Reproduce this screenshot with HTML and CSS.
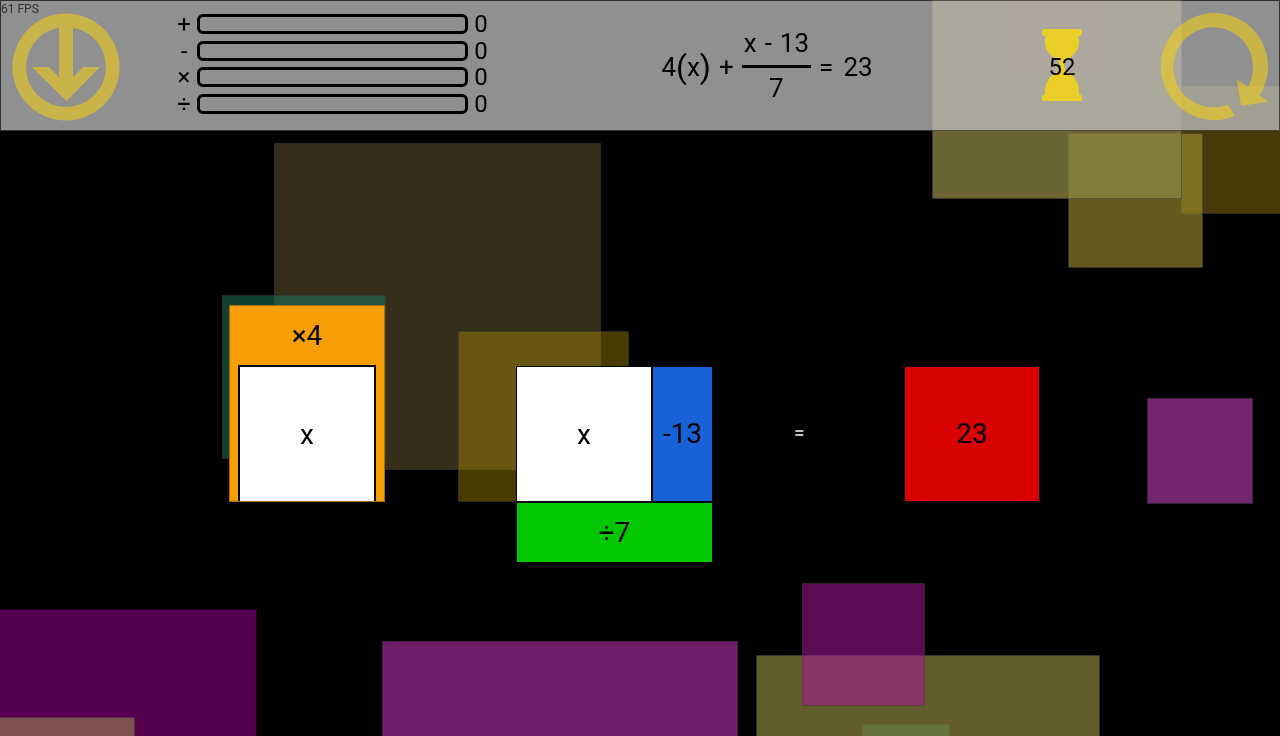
FILE: index.html
```html
<!DOCTYPE html>
<html lang="en">
<head>
<meta charset="utf-8">
<title>Equation Game</title>
<link rel="stylesheet" href="styles.css">
</head>
<body>
<svg class="backdrop" viewBox="0 0 1280 736" preserveAspectRatio="xMidYMid slice" aria-hidden="true">
  <g transform="translate(.5 .5)">
    <rect x="1181" y="86" width="120" height="127" fill="#453a08"/>
    <rect x="1068" y="133" width="134" height="134" fill="#a09031" fill-opacity=".63"/>
    <rect x="932" y="-51" width="249" height="249" fill="#8f8744" fill-opacity=".75"/>
    <rect class="soft" x="1009" y="-21" width="94" height="94" fill="#905060" fill-opacity=".3"/>
    <rect x="274" y="143" width="326" height="326" fill="#352e1b"/>
    <rect x="222" y="295" width="163" height="163" fill="#1e7259" fill-opacity=".57"/>
    <rect x="458" y="331" width="170" height="170" fill="#b49600" fill-opacity=".4"/>
    <rect x="1147" y="398" width="105" height="105" fill="#73256d"/>
    <rect x="756" y="655" width="343" height="343" fill="#635d2b"/>
    <rect x="802" y="583" width="122" height="122" fill="#a9169d" fill-opacity=".54"/>
    <rect class="soft" x="862" y="724" width="87" height="87" fill="#689860" fill-opacity=".4"/>
    <rect x="382" y="641" width="355" height="355" fill="#6f1d6a"/>
    <rect class="soft" x="-20" y="609" width="276" height="276" fill="#580050"/>
    <rect x="-20" y="717" width="154" height="154" fill="#805050"/>
  </g>
</svg>
<header class="panel">
  <output class="fps">61 FPS</output>
  <button class="icon-button" type="button" aria-label="Drop">
    <svg viewBox="0 0 108 108"><path fill-rule="evenodd" d="M54 .5a53.500 53.500 0 1 1 0 107a53.500 53.500 0 1 1 0-107zM54 14a40 40 0 1 0 0 80a40 40 0 1 0 0-80z"/><path d="M47 13H61V64.500L71 54H88L54.500 88L20 54H37L47 64.500z"/></svg>
  </button>
  <div class="scores">
    <div class="score"><label for="add">+</label><progress id="add" value="0" max="10"></progress><span>0</span></div>
    <div class="score"><label for="sub">-</label><progress id="sub" value="0" max="10"></progress><span>0</span></div>
    <div class="score"><label for="mul">×</label><progress id="mul" value="0" max="10"></progress><span>0</span></div>
    <div class="score"><label for="div">÷</label><progress id="div" value="0" max="10"></progress><span>0</span></div>
  </div>
  <div class="equation">
    <span class="term">4<span class="paren">(</span>x<span class="paren">)</span></span>
    <span>+</span>
    <span class="fraction"><span class="numerator"><span>x</span> <span>-</span> <span>13</span></span><span class="denominator">7</span></span>
    <span class="equals">=</span>
    <span>23</span>
  </div>
  <div class="timer">
    <svg viewBox="0 0 40 72" aria-hidden="true"><path d="M1.500 0H38.500L40 1.500V5.500L38 7H36.500C39 17 34 24 29 28C25 31 22 33 22 36.500C22 40 25 42 28 45C34 49 37 55 37 62V65.500H38.500L40 67V72H0V67L1.500 65.500H3V62C3 55 6 49 12 45C15 42 18 40 18 36.500C18 33 15 31 11 28C6 24 1 17 3.500 7H2L0 5.500V1.500z"/></svg>
    <span>52</span>
  </div>
  <button class="icon-button" type="button" aria-label="Restart">
    <svg viewBox="0 0 108 108"><path d="M68 91.500A40 40 0 1 1 88 74L77 66.500L81 93L108 88.500L99.500 82.500A53.500 53.500 0 1 0 75 103z"/></svg>
  </button>
</header>
<main class="board">
  <div class="product">
    <div class="factor">×4</div>
    <div class="block variable">x</div>
  </div>
  <div class="quotient">
    <div class="block variable">x</div>
    <div class="block subtract">-13</div>
    <div class="block divisor">÷7</div>
  </div>
  <div class="balance">=</div>
  <div class="block result">23</div>
</main>
</body>
</html>
```
FILE: styles.css
```css
* {
  box-sizing: border-box;
}

body {
  margin: 0;
  min-height: 100vh;
  background: #000;
  color: #000;
  font-family: Roboto, sans-serif;
  overflow: hidden;
}

.backdrop {
  position: fixed;
  inset: 0;
  width: 100%;
  height: 100%;
  z-index: -1;
}

.backdrop rect {
  stroke: #3c3c3c;
  stroke-opacity: 0.5;
}

.backdrop .soft {
  stroke: none;
}

.panel {
  position: relative;
  display: grid;
  grid-template-columns: 108px 368px 1fr 40px 197px;
  align-items: center;
  padding: 12px 0 9px 11px;
  border: 1px solid rgba(70, 70, 70, 0.7);
  background: rgba(192, 192, 192, 0.75);
  background-clip: padding-box;
}

.fps {
  position: absolute;
  top: 0;
  left: 0;
  font-size: 12px;
  line-height: 16px;
  color: #303030;
}

.icon-button {
  width: 108px;
  height: 108px;
  padding: 0;
  border: 0;
  background: none;
  justify-self: end;
  margin-right: 11px;
  cursor: pointer;
}

.icon-button:first-of-type {
  margin-right: 0;
}

.icon-button svg {
  display: block;
  fill: #f6d20e;
  opacity: 0.55;
}

.scores {
  display: flex;
  flex-direction: column;
  justify-content: space-between;
  height: 100px;
  padding-left: 57px;
  margin-bottom: 6px;
}

.score {
  display: grid;
  grid-template-columns: 14px 1fr 14px;
  column-gap: 6px;
  align-items: center;
  height: 20px;
  font-size: 24px;
  line-height: 20px;
  text-align: center;
}

.score progress {
  appearance: none;
  width: 100%;
  height: 20px;
  border: 3px solid #000;
  border-radius: 6px;
  background: none;
}

.score progress::-webkit-progress-bar {
  background: none;
}

.equation {
  display: flex;
  justify-content: center;
  align-items: center;
  gap: 8px;
  padding-left: 4px;
  font-size: 26px;
  line-height: 32px;
}

.term {
  display: flex;
  align-items: center;
}

.paren {
  font-size: 32px;
}

.fraction {
  display: flex;
  flex-direction: column;
  margin-bottom: 4px;
  text-align: center;
}

.numerator {
  display: flex;
  gap: 8px;
  padding: 0 2px 6px;
  border-bottom: 3px solid #000;
}

.denominator {
  padding-top: 4px;
}

.equals {
  padding-right: 2px;
}

.timer {
  display: grid;
  place-items: center;
  font-size: 24px;
}

.timer > * {
  grid-area: 1 / 1;
}

.timer svg {
  width: 40px;
  height: 72px;
  margin-bottom: 4px;
  fill: #e9ce28;
}

.board {
  display: flex;
  justify-content: center;
  align-items: flex-start;
  padding: 174px 12px 0 0;
  font-size: 28px;
  line-height: 32px;
}

.block {
  display: grid;
  place-items: center;
}

.variable {
  width: 134px;
  height: 134px;
  padding-top: 2px;
  background: #fff;
}

.product {
  display: grid;
  grid-template-rows: 59px auto;
  justify-items: center;
  width: 156px;
  margin-right: 131px;
  border: 1px solid #a96c05;
  background: #f79e05;
}

.product .variable {
  width: 138px;
  height: 136px;
  border: 2px solid #000;
  border-bottom: 0;
}

.factor {
  display: grid;
  place-items: center;
}

.quotient {
  display: grid;
  grid-template-columns: 134px 59px;
  grid-template-rows: 134px 59px;
  gap: 2px;
  margin-top: 61px;
  padding: 1px 0 0 1px;
  background: #000;
}

.subtract {
  background: #1862d8;
}

.divisor {
  grid-column: 1 / 3;
  background: #03c703;
}

.balance {
  width: 193px;
  margin-top: 112px;
  padding-right: 18px;
  font-size: 18px;
  font-weight: 700;
  text-align: center;
  color: #c0c0c0;
}

.result {
  width: 134px;
  height: 134px;
  margin-top: 62px;
  background: #d80202;
}
```
